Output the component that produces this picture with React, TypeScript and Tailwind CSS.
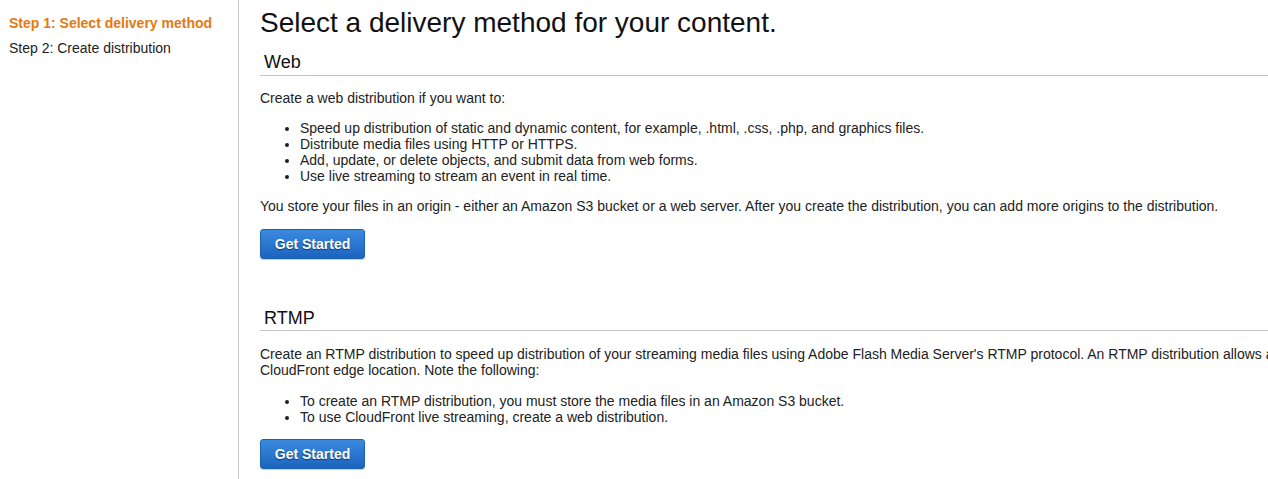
import React from "react";

const Btn = () => (
  <button className="h-[30px] w-[105px] rounded-[3px] border border-[#1e62ab] bg-gradient-to-b from-[#3a8ae0] to-[#1b64be] text-[14px] font-bold text-white [text-shadow:0_1px_1px_rgba(0,0,0,0.5)] shadow-[0_1px_1px_rgba(0,0,0,0.2)]">
    Get Started
  </button>
);

export default function App() {
  return (
    <div className="flex h-[479px] w-[1268px] overflow-hidden bg-white text-[14px] leading-[16px] text-[#222] font-['Liberation_Sans',Arial,sans-serif]">
      <div className="w-[239px] shrink-0 border-r border-[#c8c8c8] pl-[9px] pt-[15px]">
        <div className="font-bold text-[#e47911]">Step 1: Select delivery method</div>
        <div className="mt-[9px] text-[#222]">Step 2: Create distribution</div>
      </div>
      <div className="w-[2200px] shrink-0 pl-[21px]">
        <h1 className="mt-[7px] text-[28px] leading-[32px] text-[#111]">Select a delivery method for your content.</h1>
        <h2 className="mt-[12px] pl-[4px] text-[18px] leading-[22px] text-[#111]">Web</h2>
        <div className="mt-[2px] border-t border-[#c4c4c4]" />
        <p className="mt-[14px]">Create a web distribution if you want to:</p>
        <ul className="mt-[14px] pl-[40px] list-disc">
          <li>Speed up distribution of static and dynamic content, for example, .html, .css, .php, and graphics files.</li>
          <li>Distribute media files using HTTP or HTTPS.</li>
          <li>Add, update, or delete objects, and submit data from web forms.</li>
          <li>Use live streaming to stream an event in real time.</li>
        </ul>
        <p className="mt-[14px]">You store your files in an origin - either an Amazon S3 bucket or a web server. After you create the distribution, you can add more origins to the distribution.</p>
        <div className="mt-[15px]"><Btn /></div>
        <h2 className="mt-[48px] pl-[4px] text-[18px] leading-[22px] text-[#111]">RTMP</h2>
        <div className="mt-[1px] border-t border-[#c4c4c4]" />
        <p className="mt-[15px]">Create an RTMP distribution to speed up distribution of your streaming media files using Adobe Flash Media Server's RTMP protocol. An RTMP distribution allows an end user to begin playing a media file before the file has finished downloading from a<br />CloudFront edge location. Note the following:</p>
        <ul className="mt-[15px] pl-[40px] list-disc">
          <li>To create an RTMP distribution, you must store the media files in an Amazon S3 bucket.</li>
          <li>To use CloudFront live streaming, create a web distribution.</li>
        </ul>
        <div className="mt-[14px]"><Btn /></div>
      </div>
    </div>
  );
}
